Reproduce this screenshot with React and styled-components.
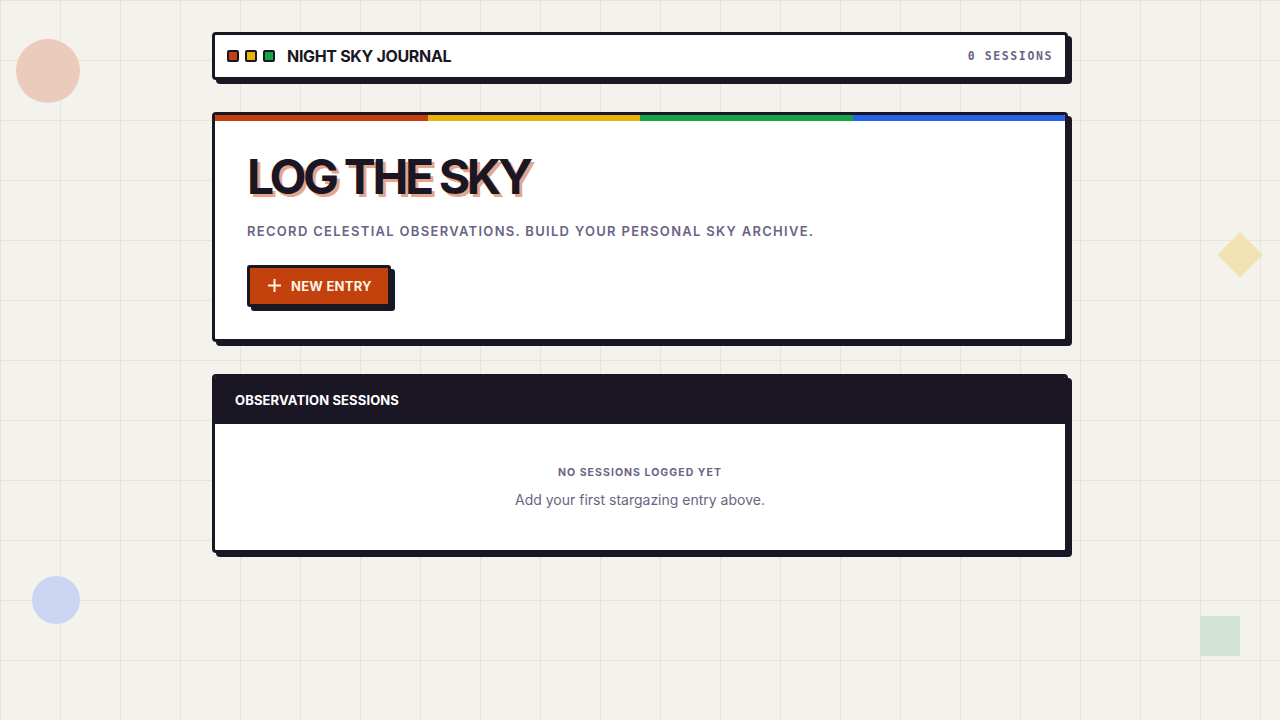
import React from 'react';
import styled, { createGlobalStyle } from 'styled-components';

const ink = '#1b1624';
const muted = '#6b6383';

const GlobalStyle = createGlobalStyle`
  html, body {
    margin: 0;
    padding: 0;
  }
  body {
    min-height: 720px;
    background-color: #f4f2ed;
    background-image:
      linear-gradient(to right, #e7e4dd 1px, transparent 1px),
      linear-gradient(to bottom, #e7e4dd 1px, transparent 1px);
    background-size: 60px 60px;
    font-family: Inter, "Noto Sans", sans-serif;
    color: ${ink};
  }
`;

const Page = styled.div`
  position: relative;
  min-height: 720px;
  padding-top: 32px;
  box-sizing: border-box;
  overflow: hidden;
`;

const Shape = styled.div`
  position: absolute;
  left: ${p => p.x}px;
  top: ${p => p.y}px;
  width: ${p => p.size}px;
  height: ${p => p.size}px;
  background: ${p => p.color};
  border-radius: ${p => (p.round ? '50%' : '0')};
  transform: ${p => (p.diamond ? 'rotate(45deg)' : 'none')};
`;

const Column = styled.main`
  position: relative;
  width: 856px;
  margin: 0 auto;
  display: flex;
  flex-direction: column;
  gap: 32px;
`;

const Card = styled.section`
  background: #fff;
  border: 3px solid ${ink};
  border-radius: 4px;
  box-shadow: 4px 4px 0 ${ink};
  overflow: hidden;
`;

const TopBar = styled(Card)`
  height: 42px;
  display: flex;
  align-items: center;
  justify-content: space-between;
  padding: 0 12px;
`;

const Brand = styled.div`
  display: flex;
  align-items: center;
  gap: 6px;
`;

const Dot = styled.span`
  width: 8px;
  height: 8px;
  border: 2px solid ${ink};
  border-radius: 2px;
  background: ${p => p.color};
`;

const BrandName = styled.h1`
  margin: 0 0 0 6px;
  font-size: 16px;
  font-weight: 700;
  letter-spacing: -0.02em;
`;

const Count = styled.span`
  font-family: "DejaVu Sans Mono", "Liberation Mono", monospace;
  font-size: 11.5px;
  font-weight: 700;
  letter-spacing: 0.14em;
  color: ${muted};
`;

const Stripe = styled.div`
  display: flex;
  height: 6px;
`;

const StripeBit = styled.span`
  flex: 1;
  background: ${p => p.color};
`;

const Hero = styled.div`
  padding: 30px 32px 32px;
`;

const Title = styled.h2`
  margin: 0;
  font-size: 48px;
  line-height: 1.1;
  font-weight: 700;
  letter-spacing: -0.07em;
  text-shadow: 3px 3px 0 #e6a58b;
`;

const Lead = styled.p`
  margin: 19px 0 26px;
  font-size: 13px;
  font-weight: 600;
  letter-spacing: 0.1em;
  color: ${muted};
`;

const Button = styled.button`
  display: inline-flex;
  align-items: center;
  gap: 10px;
  height: 42px;
  padding: 0 16px 0 18px;
  background: #c2410c;
  color: #fdf3e7;
  border: 3px solid ${ink};
  border-radius: 3px;
  box-shadow: 4px 4px 0 ${ink};
  font-family: inherit;
  font-size: 13px;
  font-weight: 700;
  letter-spacing: 0.02em;
  cursor: pointer;
`;

const SectionHead = styled.header`
  background: ${ink};
  color: #fff;
  height: 47px;
  display: flex;
  align-items: center;
  padding: 0 20px;
  font-size: 13px;
  font-weight: 700;
  letter-spacing: 0.01em;
`;

const Empty = styled.div`
  padding: 42px 20px 42px;
  text-align: center;
`;

const EmptyTitle = styled.div`
  font-size: 10.5px;
  font-weight: 700;
  letter-spacing: 0.1em;
  color: ${muted};
`;

const EmptyText = styled.p`
  margin: 12px 0 0;
  font-size: 14px;
  color: ${muted};
`;

const Plus = () => (
  <svg width="13" height="13" viewBox="0 0 13 13" fill="none" stroke="currentColor" strokeWidth="2">
    <path d="M6.5 0v13M0 6.5h13" />
  </svg>
);

export default function App() {
  return (
    <>
      <GlobalStyle />
      <Page>
        <Shape x={16} y={39} size={64} round color="#ebcbbb" />
        <Shape x={1224} y={239} size={32} diamond color="#f2e2b1" />
        <Shape x={32} y={576} size={48} round color="#cad6ef" />
        <Shape x={1200} y={616} size={40} color="#d1e4d6" />
        <Column>
          <TopBar>
            <Brand>
              <Dot color="#c2410c" />
              <Dot color="#eab308" />
              <Dot color="#16a34a" />
              <BrandName>NIGHT SKY JOURNAL</BrandName>
            </Brand>
            <Count>0 SESSIONS</Count>
          </TopBar>

          <Card>
            <Stripe>
              <StripeBit color="#c2410c" />
              <StripeBit color="#eab308" />
              <StripeBit color="#16a34a" />
              <StripeBit color="#2563eb" />
            </Stripe>
            <Hero>
              <Title>LOG THE SKY</Title>
              <Lead>RECORD CELESTIAL OBSERVATIONS. BUILD YOUR PERSONAL SKY ARCHIVE.</Lead>
              <Button>
                <Plus />
                NEW ENTRY
              </Button>
            </Hero>
          </Card>

          <Card>
            <SectionHead>OBSERVATION SESSIONS</SectionHead>
            <Empty>
              <EmptyTitle>NO SESSIONS LOGGED YET</EmptyTitle>
              <EmptyText>Add your first stargazing entry above.</EmptyText>
            </Empty>
          </Card>
        </Column>
      </Page>
    </>
  );
}
